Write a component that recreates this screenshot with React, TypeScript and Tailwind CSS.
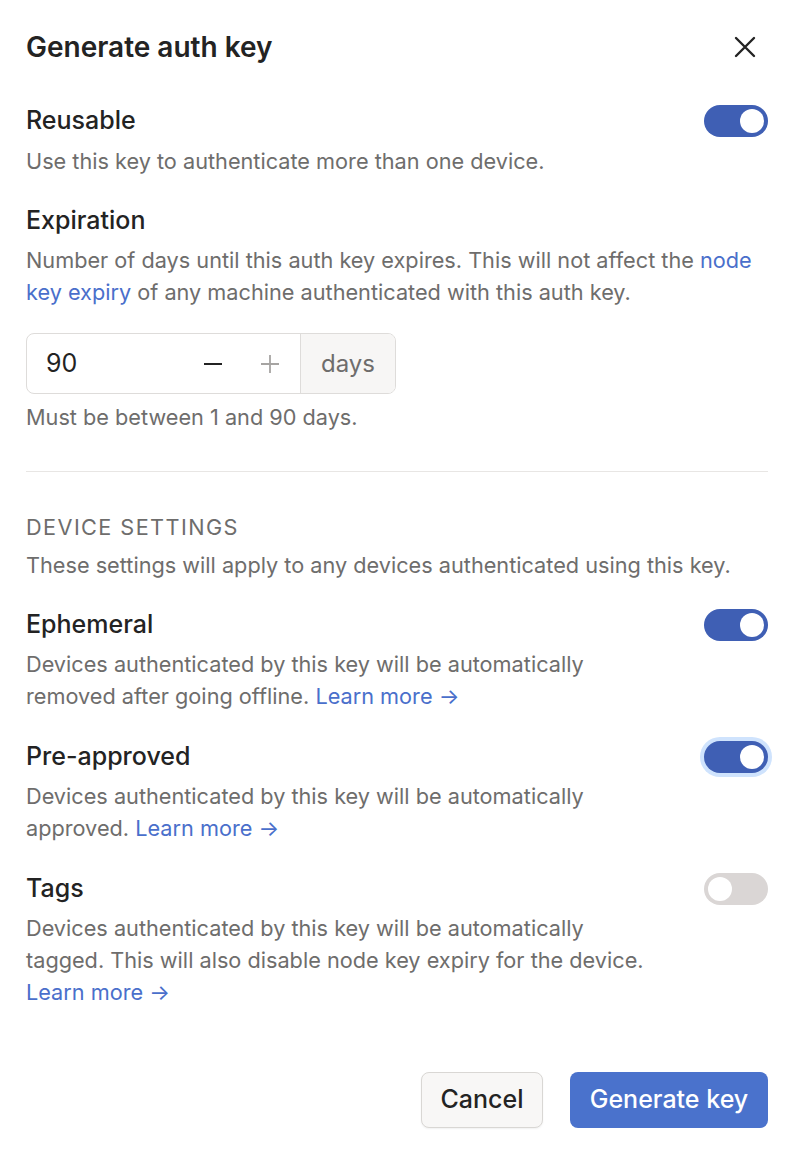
import React from "react";

function Toggle({ on, focus }: { on: boolean; focus?: boolean }) {
  return (
    <div
      className={`flex h-[32px] w-[64px] shrink-0 items-center rounded-full px-[4px] ${
        on ? "justify-end bg-[#3f5fb4]" : "justify-start bg-[#dad6d5]"
      } ${focus ? "ring-[4px] ring-[#cfe3fd]" : ""}`}
    >
      <div className="h-[24px] w-[24px] rounded-full bg-white" />
    </div>
  );
}

function Arrow() {
  return <span>&nbsp;→</span>;
}

function Setting({
  title,
  on,
  focus,
  children,
}: {
  title: string;
  on: boolean;
  focus?: boolean;
  children: React.ReactNode;
}) {
  return (
    <div className="flex flex-col">
      <div className="flex h-[32px] items-center justify-between">
        <div className="text-[25px] font-medium text-[#232323]">{title}</div>
        <Toggle on={on} focus={focus} />
      </div>
      <p className="mt-[7px] max-w-[625px] text-[21.7px] leading-[32px] text-[#6e6d6c]">{children}</p>
    </div>
  );
}

export default function App() {
  return (
    <div
      className="min-h-[1156px] w-[800px] bg-white pl-[26px] pr-[32px] pt-[25px]"
      style={{ fontFamily: "Inter, 'Noto Sans', sans-serif" }}
    >
      <div className="flex h-[44px] items-center justify-between">
        <h1 className="text-[28px] font-semibold text-[#232323]">Generate auth key</h1>
        <svg width="22" height="22" viewBox="0 0 22 22" className="mr-[12px]">
          <path d="M2 2 L20 20 M20 2 L2 20" stroke="#232323" strokeWidth="2.4" strokeLinecap="round" />
        </svg>
      </div>

      <div className="mt-[36px]">
        <div className="flex h-[32px] items-center justify-between">
          <div className="text-[25px] font-medium text-[#232323]">Reusable</div>
          <Toggle on />
        </div>
        <p className="mt-[8px] text-[21.7px] leading-[32px] text-[#6e6d6c]">
          Use this key to authenticate more than one device.
        </p>
      </div>

      <div className="mt-[27px]">
        <div className="text-[25px] font-medium leading-[32px] text-[#232323]">Expiration</div>
        <p className="mt-[8px] text-[21.7px] leading-[32px] text-[#6e6d6c]">
          Number of days until this auth key expires. This will not affect the{" "}
          <span className="text-[#4a6fcb]">node key expiry</span> of any machine authenticated with this auth key.
        </p>
        <div className="mt-[25px] flex h-[61px] w-[370px] overflow-hidden rounded-[8px] border border-[#dedcda]">
          <div className="flex flex-1 items-center pl-[19px] pr-[20px]">
            <span className="flex-1 text-[25px] text-[#232323]">90</span>
            <svg width="20" height="20" viewBox="0 0 20 20" className="mr-[37px]">
              <path d="M1 10 H19" stroke="#232323" strokeWidth="2.2" />
            </svg>
            <svg width="20" height="20" viewBox="0 0 20 20">
              <path d="M1 10 H19 M10 1 V19" stroke="#a6a4a2" strokeWidth="1.8" />
            </svg>
          </div>
          <div className="flex w-[95px] items-center justify-center border-l border-[#dedcda] bg-[#f7f6f5] text-[24px] text-[#6e6d6c]">
            days
          </div>
        </div>
        <p className="mt-[7px] text-[21.7px] leading-[32px] text-[#6e6d6c]">Must be between 1 and 90 days.</p>
      </div>

      <div className="mt-[38px] h-px bg-[#e8e6e4]" />

      <div className="mt-[39px] text-[21.7px] uppercase leading-[32px] tracking-[0.065em] text-[#6e6d6c]">
        Device settings
      </div>
      <p className="mt-[6px] text-[21.7px] leading-[32px] text-[#6e6d6c]">
        These settings will apply to any devices authenticated using this key.
      </p>

      <div className="mt-[28px] flex flex-col gap-[29px]">
        <Setting title="Ephemeral" on>
          Devices authenticated by this key will be automatically removed after going offline.{" "}
          <span className="text-[#4a6fcb]">
            Learn more
            <Arrow />
          </span>
        </Setting>
        <Setting title="Pre-approved" on focus>
          Devices authenticated by this key will be automatically approved.{" "}
          <span className="text-[#4a6fcb]">
            Learn more
            <Arrow />
          </span>
        </Setting>
        <Setting title="Tags" on={false}>
          Devices authenticated by this key will be automatically tagged. This will also disable node key expiry for the
          device.{" "}
          <span className="text-[#4a6fcb]">
            Learn more
            <Arrow />
          </span>
        </Setting>
      </div>

      <div className="mt-[64px] flex justify-end gap-[27px]">
        <button className="h-[56px] w-[122px] rounded-[8px] border border-[#d9d7d4] bg-[#f8f7f6] text-[25px] font-medium text-[#232323] shadow-[0_1px_2px_rgba(0,0,0,0.06)]">
          Cancel
        </button>
        <button className="h-[56px] w-[198px] rounded-[8px] bg-[#4a72cc] text-[25px] font-medium text-white">
          Generate key
        </button>
      </div>
    </div>
  );
}
